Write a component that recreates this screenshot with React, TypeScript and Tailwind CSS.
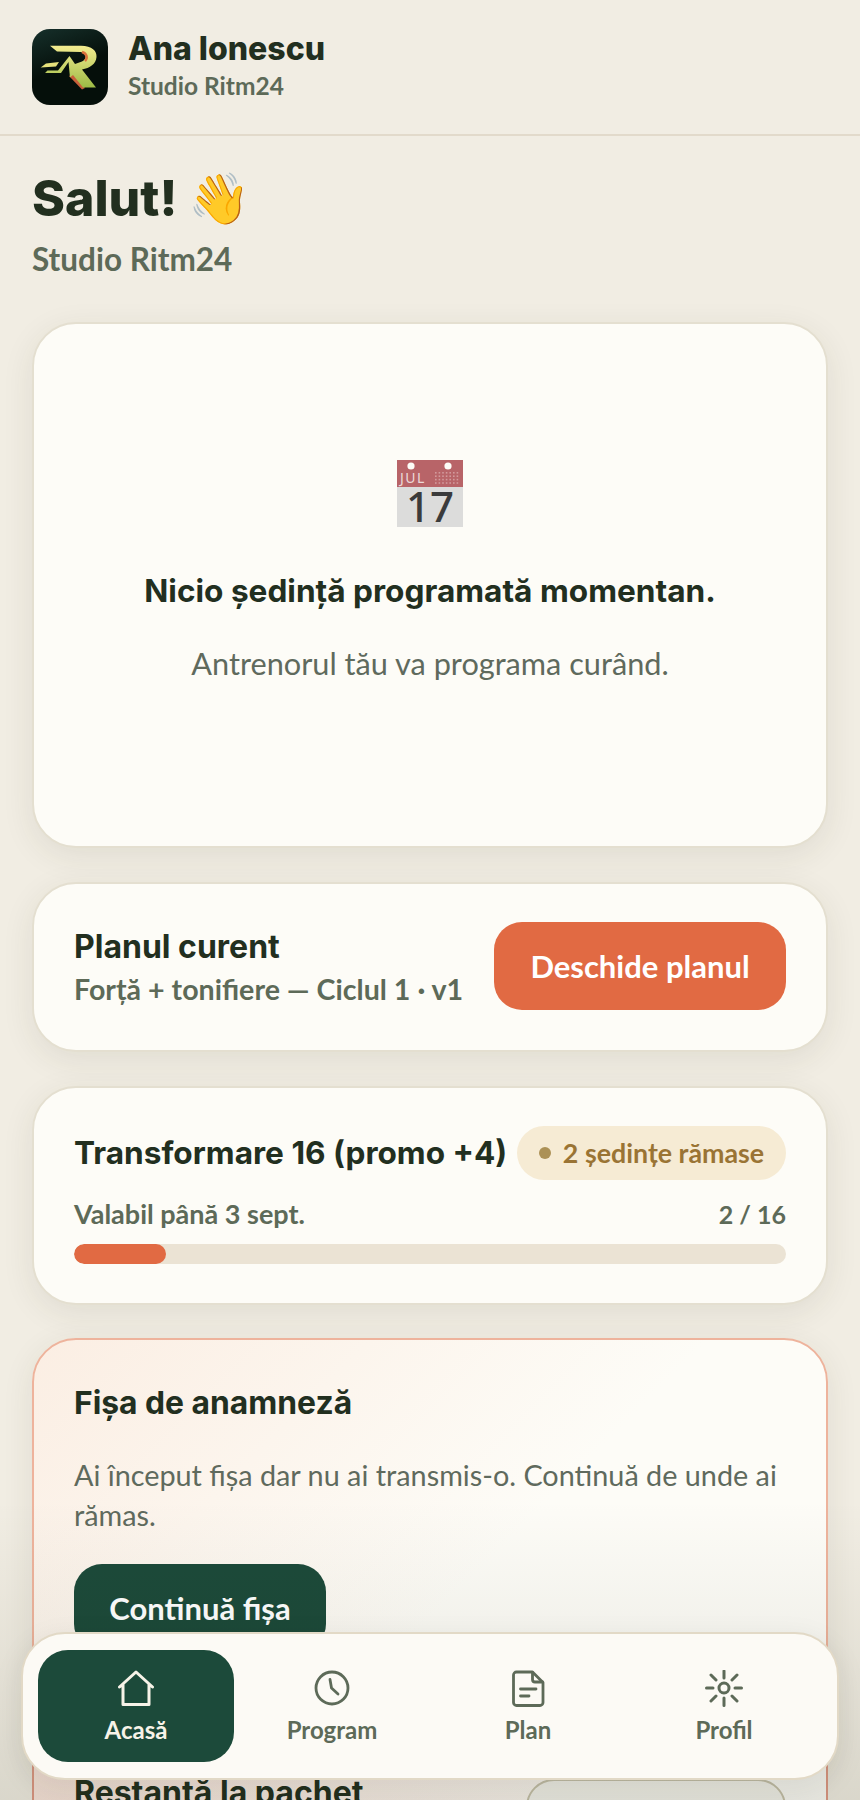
import React from "react";

const body = "font-['Lato',sans-serif]";
const head = "font-['Inter',sans-serif]";

function Logo() {
  return (
    <div className="w-[76px] h-[76px] rounded-[18px] bg-[linear-gradient(160deg,#16302b,#050f0a_50%)] shrink-0">
      <svg width="76" height="76" viewBox="0 0 76 76">
        <defs>
          <linearGradient id="lg" x1="0" y1="0" x2="0" y2="1">
            <stop offset="0" stopColor="#f4ec90" />
            <stop offset="1" stopColor="#9dbb45" />
          </linearGradient>
        </defs>
        <path d="M37,47 L41,45 L53,59 L50,60.5 Z" fill="#c9603a" />
        <path d="M18,16.7 L49,16.7 C60,16.7 65,22 64.5,28 C64,35 58,39 50,40.5 L64,58.5 L51,58.5 L41,46 L38,48.5 L36.5,33 L29,44 L13,44 L15.5,41.5 L26,41.5 L37.5,27 L43,35 L50,32.5 C55,30 55,25 49,23 L25,22.5 Z" fill="url(#lg)" />
        <path d="M50,23 C55,24.5 56,29 53,32" stroke="#d8703c" strokeWidth="2.5" fill="none" />
        <path d="M8.7,38.5 L14,34.5 L27,33 L24,37.5 Z" fill="#e6e27c" />
      </svg>
    </div>
  );
}

function CalendarEmoji() {
  return (
    <svg width="66" height="67" viewBox="0 0 66 67">
      <rect x="0" y="0" width="66" height="27" fill="#b86468" />
      <rect x="0" y="27" width="66" height="40" fill="#dcdcdb" />
      <circle cx="14" cy="6" r="3.6" fill="#fdfcf7" />
      <circle cx="51" cy="6" r="3.6" fill="#fdfcf7" />
      <text x="3" y="23" fontFamily="'Noto Sans',sans-serif" fontSize="14" letterSpacing="1.5" fill="#ecd9d9">JUL</text>
      <g fill="#d29a9c">
        {[0, 1, 2, 3, 4, 5, 6].flatMap((c) =>
          [0, 1, 2, 3].map((r) => <rect key={`${c}-${r}`} x={38 + c * 3.6} y={12 + r * 3.4} width="1.6" height="1.6" />)
        )}
      </g>
      <text x="33" y="62" textAnchor="middle" fontFamily="'Noto Sans',sans-serif" fontWeight="500" fontSize="42" fill="#3b3b3b">17</text>
    </svg>
  );
}

const HomeIcon = () => (
  <svg width="38" height="38" viewBox="0 0 38 38" fill="none" stroke="currentColor" strokeWidth="3" strokeLinejoin="round" strokeLinecap="round">
    <path d="M2.5 17 L19 2 L35.5 17 M6 14.5 V34.5 H32 V14.5" />
  </svg>
);
const ClockIcon = () => (
  <svg width="38" height="38" viewBox="0 0 38 38" fill="none" stroke="currentColor" strokeWidth="2.8" strokeLinejoin="round" strokeLinecap="round">
    <circle cx="19" cy="18" r="16" />
    <path d="M17 9.5 L18.5 18 L25 24" />
  </svg>
);
const FileIcon = () => (
  <svg width="38" height="38" viewBox="0 0 38 38" fill="none" stroke="currentColor" strokeWidth="2.8" strokeLinejoin="round" strokeLinecap="round">
    <path d="M7.5 2 H23.5 L34 12.5 V32.5 a3 3 0 0 1 -3 3 H7.5 a3 3 0 0 1 -3 -3 V5 a3 3 0 0 1 3 -3 Z" />
    <path d="M23.5 2.5 V9.5 a2.5 2.5 0 0 0 2.5 2.5 H33.5" />
    <path d="M11.5 19 H27 M11.5 26 H20" />
  </svg>
);
const SunIcon = () => (
  <svg width="40" height="38" viewBox="0 0 40 38" fill="none" stroke="currentColor" strokeWidth="3" strokeLinejoin="round" strokeLinecap="round">
    <circle cx="20" cy="18" r="5" />
    <path d="M20 1 V8 M20 28 V35.5 M2.5 18 H9 M31 18 H37.5 M7 5 L12 10 M33 5 L28 10 M7 31 L12 26 M33 31 L28 26" />
  </svg>
);

function NavItem({ label, icon, active }: { label: string; icon: React.ReactNode; active?: boolean }) {
  return (
    <div className={`flex-1 h-[112px] rounded-[30px] flex flex-col items-center justify-center gap-[9px] ${active ? "bg-[#1c4a3a] text-[#f7f3e8]" : "text-[#5d6a58]"}`}>
      {icon}
      <span className={`${body} text-[24px] leading-[26px] font-bold`}>{label}</span>
    </div>
  );
}

const cardShadow = "shadow-[0_8px_32px_rgba(60,60,30,0.09)]";

export default function App() {
  return (
    <div className={`relative h-[1800px] overflow-hidden bg-[#f1ede3] ${body}`}>
      <header className="h-[136px] border-b-2 border-[#e2dacb] px-[32px] flex items-center gap-[20px]">
        <Logo />
        <div>
          <div className={`${head} -mt-[3px] text-[32px] leading-[38px] font-extrabold text-[#222f1f]`}>Ana Ionescu</div>
          <div className="mt-[3px] text-[24.5px] leading-[30px] font-bold text-[#5d6a58]">Studio Ritm24</div>
        </div>
      </header>
      <main className="px-[32px] pt-[32px] flex flex-col">
        <h1 className={`${head} text-[50px] leading-[60px] font-extrabold text-[#222f1f]`}>Salut! 👋</h1>
        <p className="mt-[12px] text-[31.5px] leading-[38px] font-bold text-[#5d6a58]">Studio Ritm24</p>

        <section className={`mt-[44px] h-[526px] rounded-[44px] bg-[#fdfcf7] border-2 border-[#e4dfd0] ${cardShadow} flex flex-col items-center pt-[136px]`}>
          <CalendarEmoji />
          <div className={`${head} mt-[43px] text-[31.6px] leading-[42px] font-bold text-[#222f1f]`}>Nicio ședință programată momentan.</div>
          <div className="mt-[31px] text-[30.7px] leading-[42px] text-[#5f6a5d]">Antrenorul tău va programa curând.</div>
        </section>

        <section className={`mt-[34px] h-[170px] rounded-[44px] bg-[#fdfcf7] border-2 border-[#e4dfd0] ${cardShadow} px-[40px] flex items-center justify-between`}>
          <div>
            <div className={`${head} text-[32px] leading-[40px] font-bold text-[#222f1f]`}>Planul curent</div>
            <div className="mt-[4px] text-[28.6px] leading-[36px] font-bold text-[#5d6a58]">Forță + tonifiere — Ciclul 1 · v1</div>
          </div>
          <button className="w-[292px] h-[88px] -mt-[2px] rounded-[28px] bg-[#e16a43] text-white text-[31px] font-bold">Deschide planul</button>
        </section>

        <section className={`mt-[34px] h-[219px] rounded-[44px] bg-[#fdfcf7] border-2 border-[#e4dfd0] ${cardShadow} px-[40px] pt-[38px]`}>
          <div className="flex items-center justify-between">
            <div className={`${head} text-[31.6px] leading-[40px] font-bold text-[#222f1f] whitespace-nowrap`}>Transformare 16 (promo +4)</div>
            <div className="h-[54px] w-[269px] shrink-0 rounded-full bg-[#f6ebd4] flex items-center justify-center gap-[12px] text-[26.8px] font-bold text-[#9a7434]">
              <span className="w-[12px] h-[12px] rounded-full bg-[#ac9156]" />
              2 ședințe rămase
            </div>
          </div>
          <div className="mt-[17px] flex justify-between text-[27px] leading-[34px] font-bold text-[#5d6a58]">
            <span>Valabil până 3 sept.</span>
            <span className="text-[25px]">2 / 16</span>
          </div>
          <div className="mt-[13px] h-[20px] rounded-full bg-[#ebe3d4] overflow-hidden">
            <div className="h-full w-[92px] rounded-full bg-[#e16a43]" />
          </div>
        </section>

        <section className={`mt-[33px] h-[440px] shrink-0 rounded-[44px] border-2 border-[#eeb39c] bg-[linear-gradient(135deg,#fbeee3,#fdfcf7_55%)] px-[40px] pt-[43px] ${cardShadow}`}>
          <div className={`${head} text-[31.8px] leading-[40px] font-bold text-[#222f1f]`}>Fișa de anamneză</div>
          <p className="mt-[32px] text-[28.8px] leading-[40px] text-[#5f6a5d]">Ai început fișa dar nu ai transmis-o. Continuă de unde ai rămas.</p>
          <button className="mt-[29px] w-[252px] h-[88px] rounded-[28px] bg-[#1c4a3a] text-white text-[31px] font-bold">Continuă fișa</button>
        </section>

        <section className="-mt-[120px] h-[300px] shrink-0 relative rounded-[44px] border-2 border-[#e09a86] bg-[linear-gradient(100deg,#fbe6dc,#fdfcf7_80%)] px-[40px] pt-[113px] flex justify-between">
          <div className={`${head} text-[32px] leading-[40px] font-bold text-[#222f1f]`}>Restanță la pachet</div>
          <div className="mt-[6px] w-[260px] h-[88px] rounded-[28px] border-2 border-[#c9c4ad] bg-[#f6f5ee]" />
        </section>
      </main>

      <div className="absolute left-0 right-0 bottom-0 h-[300px] bg-[linear-gradient(to_bottom,rgba(30,35,10,0),rgba(30,35,10,0.11))] pointer-events-none" />
      <nav className="absolute left-[21px] right-[21px] bottom-[20px] h-[148px] rounded-[44px] border-2 border-[#e2d9c6] bg-[#fcfaf5] px-[15px] flex items-center shadow-[0_8px_30px_rgba(40,40,20,0.08)]">
        <NavItem active label="Acasă" icon={<HomeIcon />} />
        <NavItem label="Program" icon={<ClockIcon />} />
        <NavItem label="Plan" icon={<FileIcon />} />
        <NavItem label="Profil" icon={<SunIcon />} />
      </nav>
    </div>
  );
}
